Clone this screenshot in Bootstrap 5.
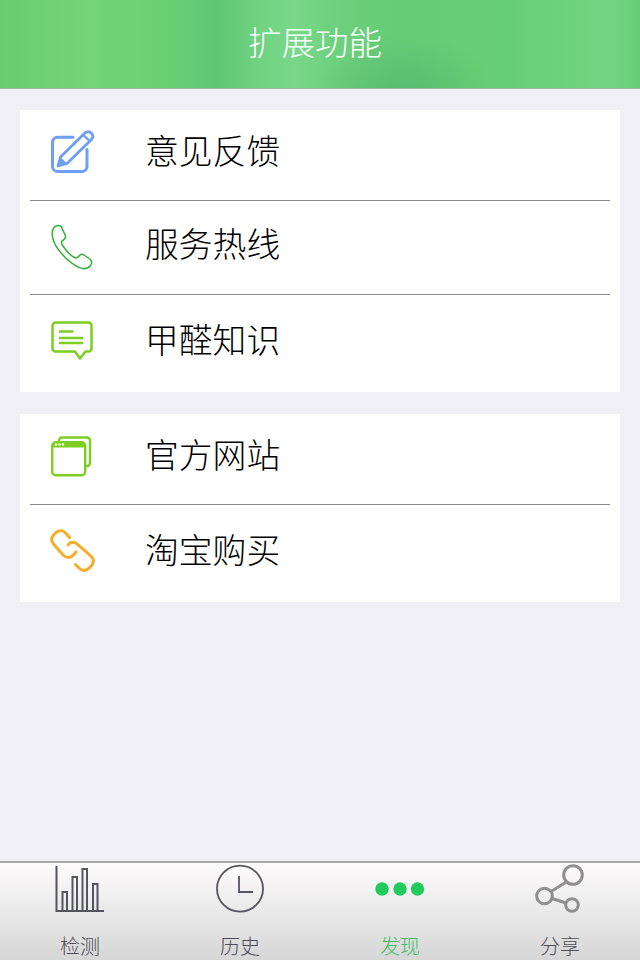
<!DOCTYPE html>
<html lang="zh-CN">
<head>
<meta charset="UTF-8">
<meta name="viewport" content="width=device-width, initial-scale=1.0">
<title>扩展功能</title>
<link rel="stylesheet" href="https://cdn.jsdelivr.net/npm/bootstrap@5.3.0/dist/css/bootstrap.min.css">
<style>
html, body { height: 960px; overflow: hidden; }
body { background: #efeff4; font-family: "Liberation Sans", "Noto Sans CJK SC", sans-serif; }
.page-wrap { height: 960px; }
.top-bar {
  height: 89px;
  padding-right: 10px;
  border-bottom: 1px solid #a9b0a9;
  color: #fff;
  font-size: 33.5px;
  font-weight: 300;
  background:
    radial-gradient(ellipse 90px 60px at 405px 95px, rgba(80,180,110,.7), rgba(80,180,110,0)),
    linear-gradient(90deg, #6bcd72 0%, #73d478 14%, #6ad074 26%, #5fc774 34%, #72d383 41%, #79d88a 46%, #6dd07c 53%, #66cc76 62%, #68d074 80%, #72d582 95%, #68cf76 100%);
}
.group-box { margin: 21px 20px 0; background: #fff; }
.group-box + .group-box { margin-top: 22px; }
.item-row { margin: 0 10px; }
.item-row + .item-row { border-top: 1px solid #8c8c8c; }
.h-a { height: 90px; }
.h-b { height: 94px; }
.h-c { height: 98px; }
.icon-cell { width: 115px; padding-left: 20px; }
.lift-2 { margin-bottom: 2px; }
.lift-4 { margin-bottom: 4px; }
.item-text { font-size: 33.8px; font-weight: 300; color: #000; line-height: 1; margin-bottom: 4px; }
.tab-bar {
  height: 99px;
  border-top: 2px solid #a6a6ab;
  background: linear-gradient(#fefcfc, #d6d6d6);
}
.tab-cell { width: 160px; }
.tab-icon { height: 54px; }
.tab-label { font-size: 20px; line-height: 1; color: #4c4c55; margin-top: 20px; font-weight: 300; }
.tab-on { color: #3dbb62; }
</style>
</head>
<body>
<div class="page-wrap d-flex flex-column">
  <div class="top-bar d-flex align-items-center justify-content-center">扩展功能</div>

  <div class="flex-grow-1">
    <div class="group-box">
      <div class="item-row h-a d-flex align-items-center">
        <div class="icon-cell">
          <svg width="46" height="46" viewBox="0 0 46 46" fill="none" class="d-block lift-4">
            <path d="M23 7.300H7.500a5 5 0 0 0-5 5V36.500a5 5 0 0 0 5 5H32a5 5 0 0 0 5-5V19.500" stroke="#6f9ff2" stroke-width="3" stroke-linecap="round"/>
            <path d="M8 36 10.500 27 35 3Q38 .8 40.500 2.500L42 4Q44 7 41.500 9.500L17 33.500Z" stroke="#6f9ff2" stroke-width="2.800" stroke-linejoin="round"/>
            <path d="M33.500 5 40 11.500" stroke="#6f9ff2" stroke-width="2.400"/>
            <path d="M8 36 10.500 27 17 33.500Z" fill="#6f9ff2"/>
          </svg>
        </div>
        <div class="item-text">意见反馈</div>
      </div>
      <div class="item-row h-b d-flex align-items-center">
        <div class="icon-cell">
          <svg width="46" height="48" viewBox="0 0 46 48" fill="none" class="d-block">
            <path d="M4 3.500C6.500 1 10 1 11.500 3L15.500 12C16 14 14 16 12 17C11 18 11.500 20 13 22C17 28 22 32.500 25.500 34C27.500 34.500 28.500 33 30 31C31 30 32.500 30 34 31L40.500 35.500C42 37 42 39 40.500 41.500C38.500 44 35.500 45 32.500 44.500C22 42 8 28 3.500 17C2 12 2 6 4 3.500Z" stroke="#2fb035" stroke-width="1.500" stroke-linejoin="round"/>
          </svg>
        </div>
        <div class="item-text">服务热线</div>
      </div>
      <div class="item-row h-c d-flex align-items-center">
        <div class="icon-cell">
          <svg width="46" height="44" viewBox="0 0 46 44" fill="none" class="d-block lift-2">
            <path d="M5.500 1.500H38.500a3 3 0 0 1 3 3V27.500a3 3 0 0 1-3 3H35.500L30 37.500 25 30.500H5.500a3 3 0 0 1-3-3V4.500a3 3 0 0 1 3-3Z" stroke="#7ccf22" stroke-width="2.500" stroke-linejoin="round"/>
            <path d="M9 10.500H23.500M9 17H33M9 22H33" stroke="#7ccf22" stroke-width="2.400"/>
          </svg>
        </div>
        <div class="item-text">甲醛知识</div>
      </div>
    </div>

    <div class="group-box">
      <div class="item-row h-a d-flex align-items-center">
        <div class="icon-cell">
          <svg width="46" height="46" viewBox="0 0 46 46" fill="none" class="d-block">
            <path d="M9 5V4.500a3 3 0 0 1 3-3H37a3 3 0 0 1 3 3V27a3 3 0 0 1-3 3H36" stroke="#7ccf22" stroke-width="2.400"/>
            <rect x="2.200" y="6.200" width="33" height="33" rx="3.500" stroke="#7ccf22" stroke-width="2.400"/>
            <path d="M2.500 11.500V9a3 3 0 0 1 3-3H32a3 3 0 0 1 3 3v2.500Z" fill="#7ccf22"/>
            <circle cx="6" cy="8.500" r="1.200" fill="#fff"/>
            <circle cx="9.500" cy="8.500" r="1.200" fill="#fff"/>
            <circle cx="13" cy="8.500" r="1.200" fill="#fff"/>
          </svg>
        </div>
        <div class="item-text">官方网站</div>
      </div>
      <div class="item-row h-c d-flex align-items-center">
        <div class="icon-cell">
          <svg width="46" height="46" viewBox="0 0 46 46" fill="none" class="d-block lift-4">
            <path d="M19.500 8.500 16 4.500C13 1 9 1 6 3.500L3.500 6C1 9 1 12 3.500 15L13 26C16 29 20 29 23 26.500L26 23" stroke="#f6ae2a" stroke-width="3" stroke-linecap="round"/>
            <path d="M18 16C20 13 24 12 27 15L41 27C44 30 44 33 42 36L38 40C35 42 32 42 29 39L25.500 35.500" stroke="#f6ae2a" stroke-width="3" stroke-linecap="round"/>
          </svg>
        </div>
        <div class="item-text">淘宝购买</div>
      </div>
    </div>
  </div>

  <div class="tab-bar d-flex">
    <div class="tab-cell d-flex flex-column align-items-center">
      <svg class="tab-icon" width="52" height="54" viewBox="0 0 52 54" fill="none">
        <path d="M2.500 3V48H50" stroke="#55555f" stroke-width="2"/>
        <path d="M8.500 48V29H13V48M18.500 48V14H23V48M28.500 48V6H33V48M39 48V21H43.500V48" stroke="#55555f" stroke-width="2"/>
      </svg>
      <div class="tab-label">检测</div>
    </div>
    <div class="tab-cell d-flex flex-column align-items-center">
      <svg class="tab-icon" width="50" height="54" viewBox="0 0 50 54" fill="none">
        <circle cx="25" cy="25.700" r="23" stroke="#55555f" stroke-width="1.800"/>
        <path d="M24 13V29H38" stroke="#55555f" stroke-width="1.800"/>
      </svg>
      <div class="tab-label">历史</div>
    </div>
    <div class="tab-cell d-flex flex-column align-items-center">
      <svg class="tab-icon" width="50" height="54" viewBox="0 0 50 54">
        <circle cx="7" cy="26" r="6.700" fill="#20cb5c"/>
        <circle cx="25" cy="26" r="6.700" fill="#20cb5c"/>
        <circle cx="42.500" cy="26" r="6.700" fill="#20cb5c"/>
      </svg>
      <div class="tab-label tab-on">发现</div>
    </div>
    <div class="tab-cell d-flex flex-column align-items-center">
      <svg class="tab-icon" width="50" height="54" viewBox="0 0 50 54" fill="none">
        <circle cx="38" cy="12" r="9.300" stroke="#8f8f8f" stroke-width="3"/>
        <circle cx="9.500" cy="33" r="7.800" stroke="#8f8f8f" stroke-width="3"/>
        <circle cx="37" cy="42" r="6.300" stroke="#8f8f8f" stroke-width="3"/>
        <path d="M16 28.500 30.500 19.500M17 35.500 31 40" stroke="#8f8f8f" stroke-width="3"/>
      </svg>
      <div class="tab-label">分享</div>
    </div>
  </div>
</div>
<script src="https://cdn.jsdelivr.net/npm/bootstrap@5.3.0/dist/js/bootstrap.bundle.min.js"></script>
</body>
</html>
